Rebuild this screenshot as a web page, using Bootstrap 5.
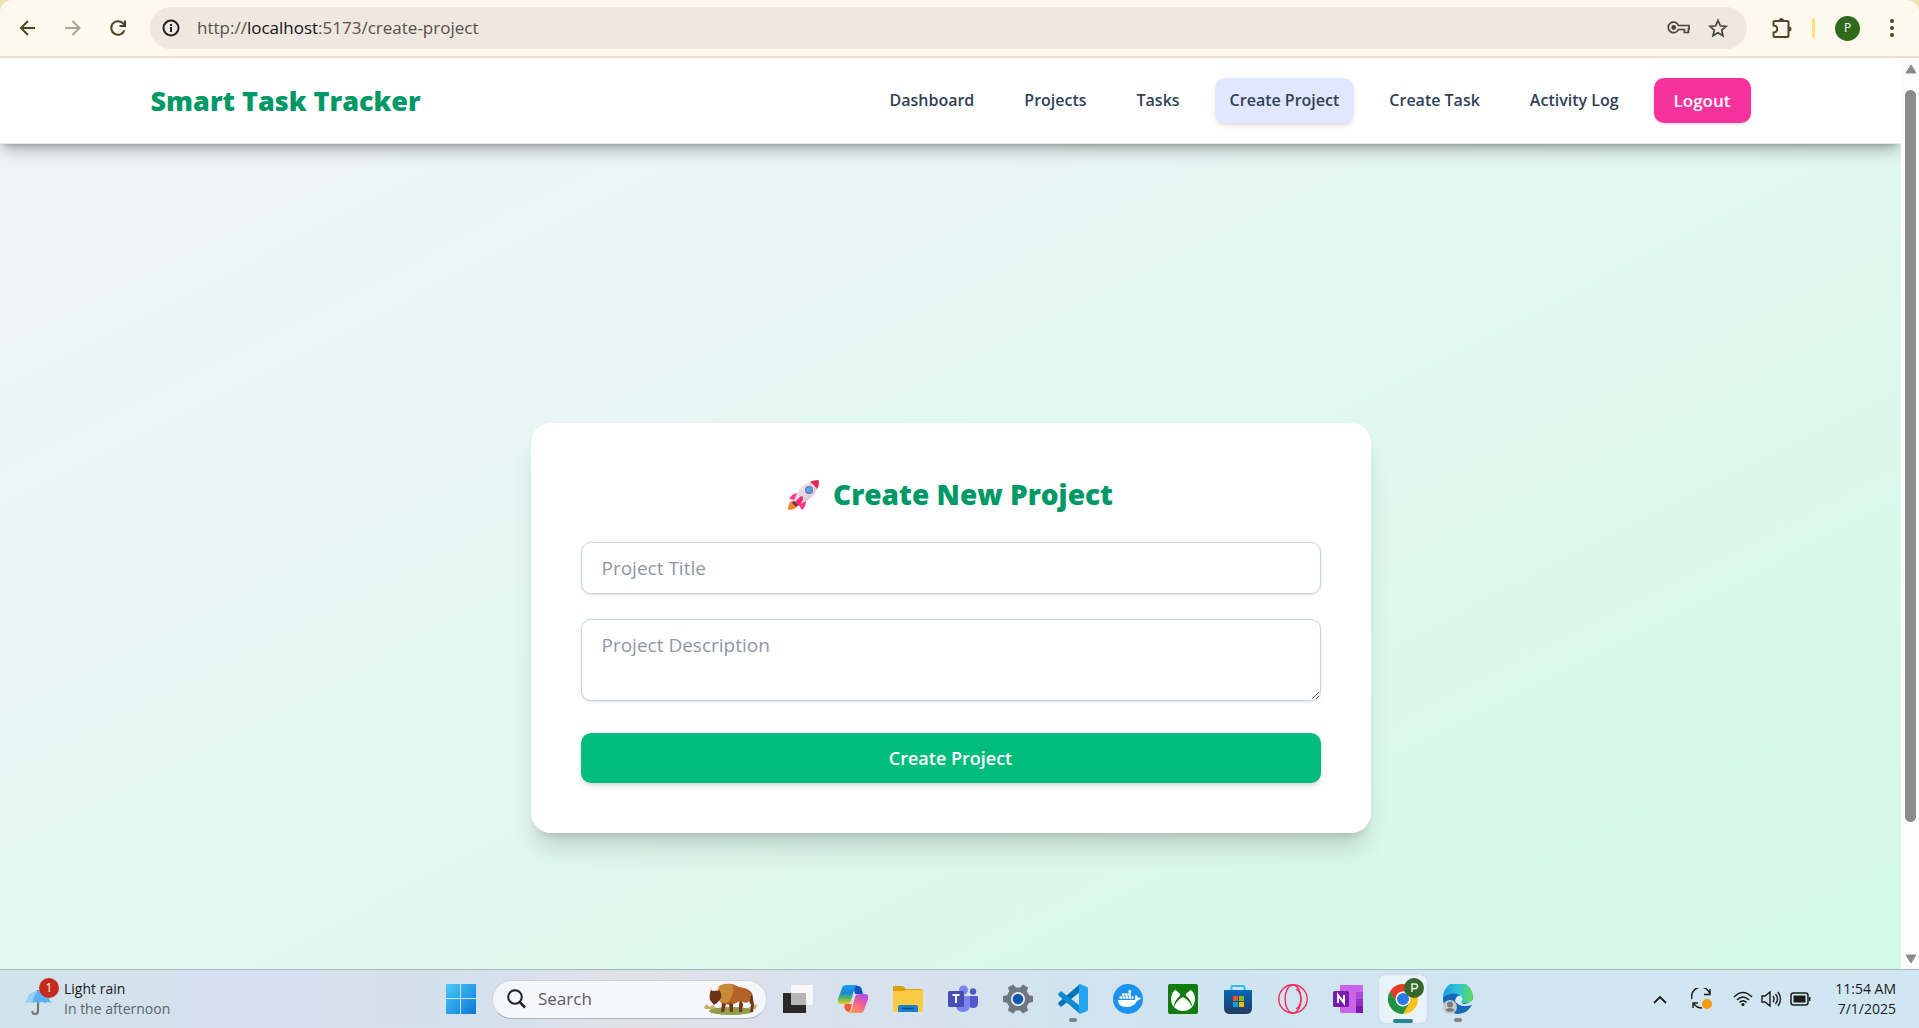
<!DOCTYPE html>
<html lang="en">
<head>
<meta charset="utf-8">
<meta name="viewport" content="width=device-width, initial-scale=1">
<title>Smart Task Tracker</title>
<link href="https://cdn.jsdelivr.net/npm/bootstrap@5.3.0/dist/css/bootstrap.min.css" rel="stylesheet">
<style>
  body { font-family: "Open Sans", "Noto Sans", sans-serif; line-height: 20px; }
  svg { display: block; flex: none; }
  button.plain { border: 0; background: none; padding: 0; display: flex; align-items: center; justify-content: center; flex: none; }

  /* browser toolbar */
  .chrome-wrap { background: #ede0b6; flex: none; }
  .chrome-bar { height: 58px; background: #fff8ec; border-bottom: 2px solid #ebe0cb; border-radius: 12px 12px 0 0; padding: 0 7px 0 5px; color: #4d4428; }
  .tool { width: 45px; height: 45px; }
  .tool.off { color: #aca796; }
  .address { height: 42px; background: #efe7e0; margin-left: 10px; padding: 0 10px 0 6px; color: #47433d; }
  .info-dot { width: 30px; height: 30px; background: #fff8ec; color: #222; }
  .url { font-size: 17px; color: #55514b; margin-left: 11px; }
  .url b { font-weight: 400; color: #111; }
  .ext { margin: 0 8px 0 12px; }
  .divider { width: 3px; height: 20px; border-radius: 2px; background: #fde07a; margin-right: 20px; }
  .avatar { width: 25px; height: 25px; background: #2f6a1d; color: #fff; font-size: 12px; }
  .dots { width: 40px; margin-left: 12px; }

  /* application page */
  .viewport-row { min-height: 0; flex: 1 1 0; }
  .page { overflow: hidden; min-width: 0; }
  .app-nav { background: #fff; border-bottom: 1px solid #e2e8f0; padding: 20px 0; box-shadow: 0 10px 15px -3px rgba(0,0,0,.25), 0 4px 6px -4px rgba(0,0,0,.3); position: relative; z-index: 1; }
  .app-nav .inner { width: 1600px; max-width: 92%; }
  .brand { font-size: 27px; line-height: 45px; font-weight: 800; color: #009966; text-decoration: none; }
  .links { gap: 20px; }
  .links a { padding: 0 15px; font-size: 16px; line-height: 45px; font-weight: 600; color: #314158; text-decoration: none; border-radius: 10px; white-space: nowrap; }
  .links a.current { background: #e0e7ff; box-shadow: 0 4px 6px -1px rgba(0,0,0,.1), 0 2px 4px -2px rgba(0,0,0,.1); }
  .logout { border: 0; background: #f8329c; color: #fff; font-size: 17px; font-weight: 600; line-height: 45px; padding: 0 20px; border-radius: 10px; box-shadow: 0 1px 3px rgba(0,0,0,.15); }
  .stage { min-height: calc(100vh - 60px); background: linear-gradient(to bottom right, #f1f5f9, #d0fae5); }
  .form-card { width: 840px; max-width: 92%; background: #fff; border-radius: 20px; padding: 50px; box-shadow: 0 20px 25px -5px rgba(0,0,0,.14), 0 8px 10px -6px rgba(0,0,0,.14); }
  .form-card h1 { font-size: 28px; line-height: 43px; font-weight: 800; color: #009966; margin: 0 0 26px; gap: 13px; }
  .field { border: 1px solid #cad5e2; border-radius: 10px; padding: 12px 20px; font-size: 19px; line-height: 26px; box-shadow: 0 1px 3px rgba(0,0,0,.12); color: #314158; margin-bottom: 25px; }
  .field::placeholder { color: #8e97a5; opacity: 1; }
  textarea.field { height: 82px; margin-bottom: 32px; resize: vertical; overflow: hidden; }
  .submit { border: 0; height: 50px; border-radius: 10px; background: #00bc7d; color: #fff; font-size: 18px; font-weight: 600; box-shadow: 0 4px 6px -1px rgba(0,0,0,.12), 0 2px 4px -2px rgba(0,0,0,.12); }
  .scroller { width: 18px; background: #fcfcfc; padding: 6px 3px 5px 4px; }
  .thumb { width: 11px; border-radius: 6px; background: #8b8b8b; margin-top: 16px; flex: 733 1 0; }
  .slack { flex: 132 1 0; }

  /* desktop taskbar */
  .taskbar { display: grid; grid-template-columns: 1fr auto 1fr; align-items: center; flex: none; height: 59px; border-top: 1px solid #a9b8be; background: linear-gradient(90deg, #d1e3ec, #d5e0ee 12%, #d3e1ec 25%, #e1e0e7 33%, #d8e1ec 42%, #d0e4f0 60%, #d0e6f1); color: #191919; font-size: 14px; }
  .dock { gap: 7px; }
  .tile { width: 48px; height: 48px; border-radius: 6px; position: relative; }
  .tile.on { background: #e9f2f8; box-shadow: 0 0 1px rgba(0,0,0,.25); }
  .tile.run::after { content: ""; position: absolute; bottom: 1px; left: 20px; width: 8px; height: 4px; border-radius: 2px; background: #7b8388; }
  .tile.on::after { left: 14px; width: 20px; bottom: 0; background: #258493; }
  .find { width: 275px; height: 39px; background: #f5f7fb; border: 1px solid #cdd6de; border-bottom-color: #aab4bd; padding: 0 7px 0 14px; }
  .find input { border: 0; background: none; outline: 0; font-size: 17px; min-width: 0; padding: 0; }
  .find input::placeholder { color: #5c5c5c; opacity: 1; }
  .weather { padding-left: 26px; }
  .weather .sub { color: #5b6469; }
  .umbrella { width: 38px; height: 42px; position: relative; }
  .count { position: absolute; left: 13px; top: 0; width: 20px; height: 20px; background: #c42b1c; color: #fff; font-size: 12px; }
  .tray { padding-right: 23px; }
  .clock { margin-left: 8px; }
</style>
</head>
<body class="d-flex flex-column vh-100 overflow-hidden">

<div class="chrome-wrap">
  <div class="chrome-bar d-flex align-items-center">
    <button class="plain tool text-reset" aria-label="Back"><svg width="18" height="18" viewBox="0 0 18 18" fill="none" stroke="currentColor" stroke-width="2"><path d="M16 9H2M9 2L2 9l7 7"/></svg></button>
    <button class="plain tool off" aria-label="Forward"><svg width="18" height="18" viewBox="0 0 18 18" fill="none" stroke="currentColor" stroke-width="2"><path d="M1 9h14.500M8.500 2l7 7-7 7"/></svg></button>
    <button class="plain tool text-reset" aria-label="Reload"><svg width="18" height="18" viewBox="0 0 18 18" fill="none" stroke="currentColor" stroke-width="2"><path d="M15.400 11.300A6.800 6.800 0 1 1 14 4.300l1.800 2M16 1.500v5.500h-5.500"/></svg></button>
    <div class="address rounded-pill flex-grow-1 d-flex align-items-center">
      <button class="plain info-dot rounded-circle" aria-label="Site information"><svg width="18" height="18" viewBox="0 0 18 18" fill="none" stroke="currentColor" stroke-width="2"><circle cx="9" cy="9" r="7.500"/><path d="M9 8v5M9 5v2"/></svg></button>
      <div class="url me-auto">http://<b>localhost</b>:5173/create-project</div>
      <button class="plain text-reset" aria-label="Passwords"><svg width="24" height="16" viewBox="0 0 24 16" fill="none" stroke="currentColor" stroke-width="1.700"><path d="M11.500 5.500H22v3.500h-.6v3.500h-4V9.500h-6A5.300 5.300 0 1 1 11.500 5.500z"/><circle cx="6.700" cy="7.500" r="2.400" fill="currentColor" stroke="none"/></svg></button>
      <button class="plain text-reset ms-3 me-2" aria-label="Bookmark"><svg width="22" height="20" viewBox="0 0 22 20" fill="none" stroke="currentColor" stroke-width="1.700"><path d="M11 2.500l2.300 5.300 5.700.5-4.300 3.800 1.300 5.600-5-3-5 3 1.300-5.600L3 8.300l5.700-.5z"/></svg></button>
    </div>
    <button class="plain tool text-reset ext" aria-label="Extensions"><svg width="24" height="24" viewBox="0 0 24 24"><path d="M5.500 5H17.500q1 0 1 1V20q0 1-1 1H4.500q-1 0-1-1V16.500C8.500 16 8.500 10 3.500 9.500V6q0-1 1-1z" fill="none" stroke="currentColor" stroke-width="2"/><path d="M9 4.500a2.500 2.500 0 0 1 5 0zM19 10.500a2.500 2.500 0 0 1 0 5z" fill="currentColor"/></svg></button>
    <span class="divider"></span>
    <span class="avatar rounded-circle d-flex align-items-center justify-content-center">P</span>
    <button class="plain text-reset dots" aria-label="Menu"><svg width="6" height="20" viewBox="0 0 6 20" fill="currentColor"><circle cx="3" cy="3" r="2"/><circle cx="3" cy="10" r="2"/><circle cx="3" cy="17" r="2"/></svg></button>
  </div>
</div>

<div class="viewport-row d-flex">
  <div class="page flex-grow-1">
    <nav class="app-nav">
      <div class="inner mx-auto d-flex align-items-center justify-content-between">
        <a class="brand" href="#">Smart Task Tracker</a>
        <div class="links d-flex align-items-center">
          <a href="#">Dashboard</a>
          <a href="#">Projects</a>
          <a href="#">Tasks</a>
          <a href="#" class="current" aria-current="page">Create Project</a>
          <a href="#">Create Task</a>
          <a href="#">Activity Log</a>
          <button class="logout" type="button">Logout</button>
        </div>
      </div>
    </nav>
    <main class="stage d-flex align-items-center justify-content-center">
      <form class="form-card">
        <h1 class="d-flex align-items-center justify-content-center">
          <svg width="32" height="32" viewBox="0 0 32 32"><defs><linearGradient id="rk" x1="0" y1="0" x2="1" y2="1"><stop offset="0" stop-color="#f4eef6"/><stop offset="1" stop-color="#cdb9d6"/></linearGradient></defs><path d="M2 23q3-3 7 0 2 4-1 6-4 2-8 2 0-5 2-8z" fill="#f9862b"/><path d="M10 14Q4 14 1 20l7 1zM18 22q0 6-4 9l-4-6z" fill="#f8418a"/><path d="M29 2Q15 3 9 14l-3 8 4 4 8-4Q29 16 31 3z" fill="url(#rk)"/><path d="M22 3Q26 1 30 1q1 0 1 2 0 4-2 7-2-4-7-7z" fill="#e9294b"/><circle cx="21" cy="11" r="4" fill="#7d6f96"/><circle cx="21" cy="11" r="2.800" fill="#4da7f5"/><path d="M13 17L6 24l4 3q5-3 5-9z" fill="#f52a70"/><path d="M6 22l4 5-3 0-3-3z" fill="#4b3a62"/></svg>
          <span>Create New Project</span>
        </h1>
        <input class="field d-block w-100" type="text" placeholder="Project Title" aria-label="Project Title">
        <textarea class="field d-block w-100" placeholder="Project Description" aria-label="Project Description"></textarea>
        <button class="submit d-block w-100" type="button">Create Project</button>
      </form>
    </main>
  </div>
  <div class="scroller d-flex flex-column" aria-hidden="true">
    <svg width="12" height="10" viewBox="0 0 12 10"><path d="M6 1l5 8H1z" fill="#8b8b8b" stroke="#8b8b8b" stroke-linejoin="round"/></svg>
    <div class="thumb"></div><div class="slack"></div>
    <svg width="12" height="10" viewBox="0 0 12 10"><path d="M6 9l5-8H1z" fill="#8b8b8b" stroke="#8b8b8b" stroke-linejoin="round"/></svg>
  </div>
</div>

<footer class="taskbar">
  <div class="weather d-flex align-items-center">
    <div class="umbrella">
      <svg width="26" height="42" viewBox="0 0 26 42"><path d="M12 12v21q0 3-3 3t-2.500-3" fill="none" stroke="#777" stroke-width="2.200"/><path d="M0 25Q2 14 12 13q10 1 13 12-3-2-6 0-3-2-6 0-3-2-6 0-3-2-7 0z" fill="#5ab1f4"/><path d="M0 25Q2 14 12 13q-5 4-5 12-3-2-7 0z" fill="#95d3fb"/></svg>
      <span class="count rounded-circle d-flex align-items-center justify-content-center">1</span>
    </div>
    <div><div>Light rain</div><div class="sub">In the afternoon</div></div>
  </div>

  <div class="dock d-flex align-items-center">
    <button class="plain tile" aria-label="Start"><svg width="30" height="30" viewBox="0 0 30 30"><defs><linearGradient id="wn" x1="0" y1="0" x2="1" y2="1"><stop offset="0" stop-color="#4cc9fb"/><stop offset="1" stop-color="#0a78d6"/></linearGradient></defs><path d="M0 0h14v14H0zM15 0h15v14H15zM0 15h14v15H0zM15 15h15v15H15z" fill="url(#wn)"/></svg></button>
    <div class="find rounded-pill d-flex align-items-center">
      <svg width="19" height="20" viewBox="0 0 19 20" fill="none" stroke="#222" stroke-width="2"><circle cx="8" cy="8" r="6.800"/><path d="M12.800 13.200L18 18.500" stroke-width="2.600"/></svg>
      <input class="flex-grow-1 ms-2 ps-1" type="search" placeholder="Search" aria-label="Search">
      <svg width="56" height="33" viewBox="0 0 56 33"><path d="M1 24l3-3 2 3 4-2 3 3h32l3-2 2-4 1 3 3-1-1 5H2z" fill="#c5b16b"/><ellipse cx="28" cy="28" rx="22" ry="4" fill="#8f9c48"/><path d="M37 15l3 6-1 8h-3l0-7zM44 14l4 8-1 7h3l1-8-2-9z" fill="#74351b"/><path d="M15 4Q21 0 29 1q6 3 12 4 6 1 7 6l-1 7-4 2-6-2-8 4-9-1-6-5z" fill="#b5622a"/><path d="M46 8q4 2 3 9" stroke="#5a2a14" fill="none"/><path d="M15 4Q21 0 29 1.500q3 5 0 11-2 7-8 8l-5-3z" fill="#c98b38"/><path d="M8 7l3 1 5-1q3 3 2 8l-4 5-3 2-4-5Q6 11 8 7z" fill="#6d3119"/><path d="M8 4q0 3 2 4M15 3q1 3-1 5" stroke="#f1d9a8" fill="none"/><path d="M19 20l-1 9h3l2-8zM26 20l1 9h3l0-8z" fill="#74351b"/></svg>
    </div>
    <button class="plain tile" aria-label="Task view"><svg width="30" height="30" viewBox="0 0 30 30"><rect y="9" width="23" height="20" fill="#2b2a2a"/><rect x="8" y="1" width="22" height="20" fill="#f7f7f7"/><rect x="8" y="9" width="15" height="12" fill="#b5b5b5"/></svg></button>
    <button class="plain tile" aria-label="Copilot"><svg width="32" height="30" viewBox="0 0 32 30"><defs><linearGradient id="c1" x1="0" y1="0" x2="0" y2="1"><stop offset="0" stop-color="#18a3ee"/><stop offset=".4" stop-color="#1886d4"/><stop offset=".7" stop-color="#55b76b"/><stop offset="1" stop-color="#f4c71a"/></linearGradient><linearGradient id="c2" x1=".8" y1="0" x2=".2" y2="1"><stop offset="0" stop-color="#b04ef1"/><stop offset=".5" stop-color="#f2608f"/><stop offset="1" stop-color="#ffa34d"/></linearGradient></defs><path d="M16 2h5q3 0 4 4l1 4h-8z" fill="#1451c4"/><path d="M8 20l7 0-2 7q-3 3-6-4z" fill="#f35a3b"/><path d="M9 1h12q-3 1-4 5l-3 11q-1 3-4 3H4Q0 20 1 15L5 4q1-3 4-3z" fill="url(#c1)"/><path d="M23 29H11q3-1 4-5l3-11q1-3 4-3h6q4 0 3 5l-4 11q-1 3-4 3z" fill="url(#c2)"/></svg></button>
    <button class="plain tile" aria-label="File Explorer"><svg width="30" height="28" viewBox="0 0 30 28"><path d="M0 2q0-1 1-1h8q2 0 4 3h15q2 0 2 2v6H0z" fill="#dd9d0f"/><path d="M0 6h11l2-1h17v20q0 2-2 2H2q-2 0-2-2z" fill="#fdcb41"/><path d="M5 27v-5q0-2 2-2h16q2 0 2 2v5z" fill="#1681d1"/><path d="M9 23.500h12" stroke="#074b84" stroke-width="1.500"/></svg></button>
    <button class="plain tile" aria-label="Teams"><svg width="30" height="28" viewBox="0 0 30 28"><circle cx="15.500" cy="5" r="4.500" fill="#7b83eb"/><circle cx="25" cy="6.500" r="3.200" fill="#5059c9"/><path d="M20 11h9q1 0 1 1v6q0 5-5 5-4 0-5-4z" fill="#5059c9"/><path d="M8 11h14v9q0 7-7 7t-7-7z" fill="#7b83eb"/><rect y="6" width="16" height="16" rx="1.500" fill="#474eb5"/><path d="M4.500 10h7M8 10v8" stroke="#fff" stroke-width="2"/></svg></button>
    <button class="plain tile" aria-label="Settings"><svg width="30" height="30" viewBox="-15 -15 30 30"><g fill="#6f7881"><circle r="11.500"/><g id="cog"><path d="M-4-10l1-5h6l1 5v20l-1 5h-6l-1-5z" transform="rotate(30)"/></g><use href="#cog" transform="rotate(60)"/><use href="#cog" transform="rotate(120)"/></g><circle r="7" fill="#eee"/><circle r="5.300" fill="#0d59ae"/></svg></button>
    <button class="plain tile run" aria-label="Visual Studio Code"><svg width="30" height="30" viewBox="0 0 30 30"><path d="M22 8L3 23l-3-3q0-1 1-2L22 0z" fill="#0574b4"/><path d="M22 22L3 7l-3 3q0 1 1 2l21 18z" fill="#0a8bd4"/><path d="M22 0l7 3q1 0 1 2v20q0 2-1 2l-7 3q-1-1-1-2V2q0-1 1-2z" fill="#24a5f1"/></svg></button>
    <button class="plain tile" aria-label="Docker"><svg width="30" height="30" viewBox="0 0 30 30"><circle cx="15" cy="15" r="15" fill="#1d91ee"/><path d="M5 16h17q1-2 0-4l1-1q2 1 2 3 2-1 3 0-1 2-4 3-3 6-11 6-8 0-8-7z" fill="#fff"/><path d="M6.500 13.500h14M9 10.500h9M15.500 7.500h3" stroke="#fff" stroke-width="2.400" stroke-dasharray="2.600 .5"/></svg></button>
    <button class="plain tile" aria-label="Xbox"><svg width="30" height="30" viewBox="0 0 30 30"><rect width="30" height="30" rx="2" fill="#107c10"/><circle cx="15" cy="15" r="12" fill="#fff"/><path d="M7 5.500q3-1 8 3 5-4 8-3l-2-2.500H9zM15 8.500Q10 3.500 6.500 5.500q5 3 6 5.500Q6 17 5.500 23.500 9 16 15 13q6 3 9.500 10.500Q24 17 17.500 11q1-2.500 6-5.500Q20 3.500 15 8.500z" fill="#107c10"/></svg></button>
    <button class="plain tile" aria-label="Microsoft Store"><svg width="30" height="30" viewBox="0 0 30 30"><defs><linearGradient id="ms" x1="0" y1="0" x2="0" y2="1"><stop offset="0" stop-color="#0667ba"/><stop offset="1" stop-color="#243a5e"/></linearGradient></defs><path d="M8.500 8V3q0-1 1-1h11q1 0 1 1v5" fill="none" stroke="#2bbdf3" stroke-width="2"/><path d="M1 6h28v18q0 6-6 6H7q-6 0-6-6z" fill="url(#ms)"/><path d="M10 12h5v5h-5z" fill="#f25022"/><path d="M16 12h5v5h-5z" fill="#7fba00"/><path d="M10 18h5v5h-5z" fill="#00a4ef"/><path d="M16 18h5v5h-5z" fill="#ffb900"/></svg></button>
    <button class="plain tile" aria-label="Opera GX"><svg width="30" height="30" viewBox="0 0 30 30" fill="none" stroke="#f52a5c" stroke-width="1.400"><circle cx="15" cy="15" r="14.200"/><ellipse cx="15" cy="15" rx="8" ry="14"/><path d="M18 5q5 3 5 10t-5 10"/></svg></button>
    <button class="plain tile" aria-label="OneNote"><svg width="30" height="28" viewBox="0 0 30 28"><path d="M7 0h23v28H9q-2 0-2-2z" fill="#ca64ea"/><path d="M23 7h7v7h-7z" fill="#ae4bd5"/><path d="M23 14h7v7h-7z" fill="#9332bf"/><path d="M23 21h7v7h-7z" fill="#7719aa"/><rect y="6" width="16" height="16" rx="1.500" fill="#7719aa"/><path d="M5 18v-8l6 8v-8" fill="none" stroke="#fff" stroke-width="2"/></svg></button>
    <button class="plain tile run on" aria-label="Chrome"><svg width="44" height="44" viewBox="-3 -3 44 44"><circle cx="19" cy="19" r="15" fill="#fbc116"/><path d="M6 11.500A15 15 0 0 1 32 11.500H19L12.500 22.800z" fill="#e33b2e"/><path d="M6 11.500A15 15 0 0 0 19 34l6.500-11.500H13z" fill="#229342"/><circle cx="19" cy="19" r="7.500" fill="#fff"/><circle cx="19" cy="19" r="6" fill="#2f76e6"/><circle cx="30" cy="8" r="10" fill="#35662a"/><path d="M28 12V4h3q2.500 0 2.500 2.300T31 8.600h-3" fill="none" stroke="#dfe8dc" stroke-width="1.600"/></svg></button>
    <button class="plain tile run" aria-label="Edge"><svg width="30" height="30" viewBox="0 0 30 30"><defs><linearGradient id="eg"><stop offset="0" stop-color="#1b9de2"/><stop offset=".5" stop-color="#2fc3d9"/><stop offset="1" stop-color="#62d955"/></linearGradient></defs><circle cx="15" cy="15" r="15" fill="#1667b5"/><path d="M0 14A15 15 0 0 1 30 12q0 7-7 7h-5q-2-1 0-3 1-4-4-6Q6 8 0 14z" fill="url(#eg)"/><path d="M12 17q1-6 6-5 3 3 0 6 3 4 12 2-3 2-8 2-7 0-10-5z" fill="#d7ebf5"/><path d="M30 15v5l-2 1q-8 2-11-1 9 1 13-5z" fill="#d0e4f0"/><circle cx="7" cy="23" r="7" fill="#c9c9c9"/><circle cx="7" cy="20.500" r="3" fill="#7b7b7b"/><path d="M2 26q5-4 10 0-5 4-10 0z" fill="#7b7b7b"/></svg></button>
  </div>

  <div class="tray d-flex align-items-center justify-content-end">
    <svg class="me-4" width="14" height="9" viewBox="0 0 14 9" fill="none" stroke="#1b1b1b" stroke-width="1.800"><path d="M1 8l6-6 6 6"/></svg>
    <svg class="me-3" width="22" height="22" viewBox="0 0 22 22" fill="none" stroke="#1b1b1b" stroke-width="1.400"><path d="M1 11A9 9 0 0 1 19 6M19 1v5.500h-6M2 20v-5h5M3 16q3 4 8 4"/><circle cx="16" cy="16" r="5" fill="#fb9a0a" stroke="none"/></svg>
    <svg class="ms-1 me-2" width="20" height="16" viewBox="0 0 20 16" fill="none" stroke="#1b1b1b" stroke-width="1.500"><path d="M1 6Q10-3 19 6M4 9q6-6 12 0M6.500 11.500q3.500-3.500 7 0"/><circle cx="10" cy="13.500" r="1.600" fill="#1b1b1b" stroke="none"/></svg>
    <svg class="me-2" width="21" height="18" viewBox="0 0 21 18" fill="none" stroke="#1b1b1b" stroke-width="1.400"><path d="M1 6h3l5-4v14l-5-4H1zM12 6q2 3 0 6M14.500 4q4 5 0 10M17 2q5 7 0 14"/></svg>
    <svg class="me-3" width="21" height="14" viewBox="0 0 21 14"><rect x="1" y="1" width="17" height="12" rx="2.500" fill="none" stroke="#1b1b1b" stroke-width="1.500"/><path d="M3.500 3.500h12v7h-12zM19 5h1.500v4H19z" fill="#1b1b1b"/></svg>
    <div class="clock text-end"><div>11:54 AM</div><div>7/1/2025</div></div>
  </div>
</footer>
<script src="https://cdn.jsdelivr.net/npm/bootstrap@5.3.0/dist/js/bootstrap.bundle.min.js"></script>
</body>
</html>
